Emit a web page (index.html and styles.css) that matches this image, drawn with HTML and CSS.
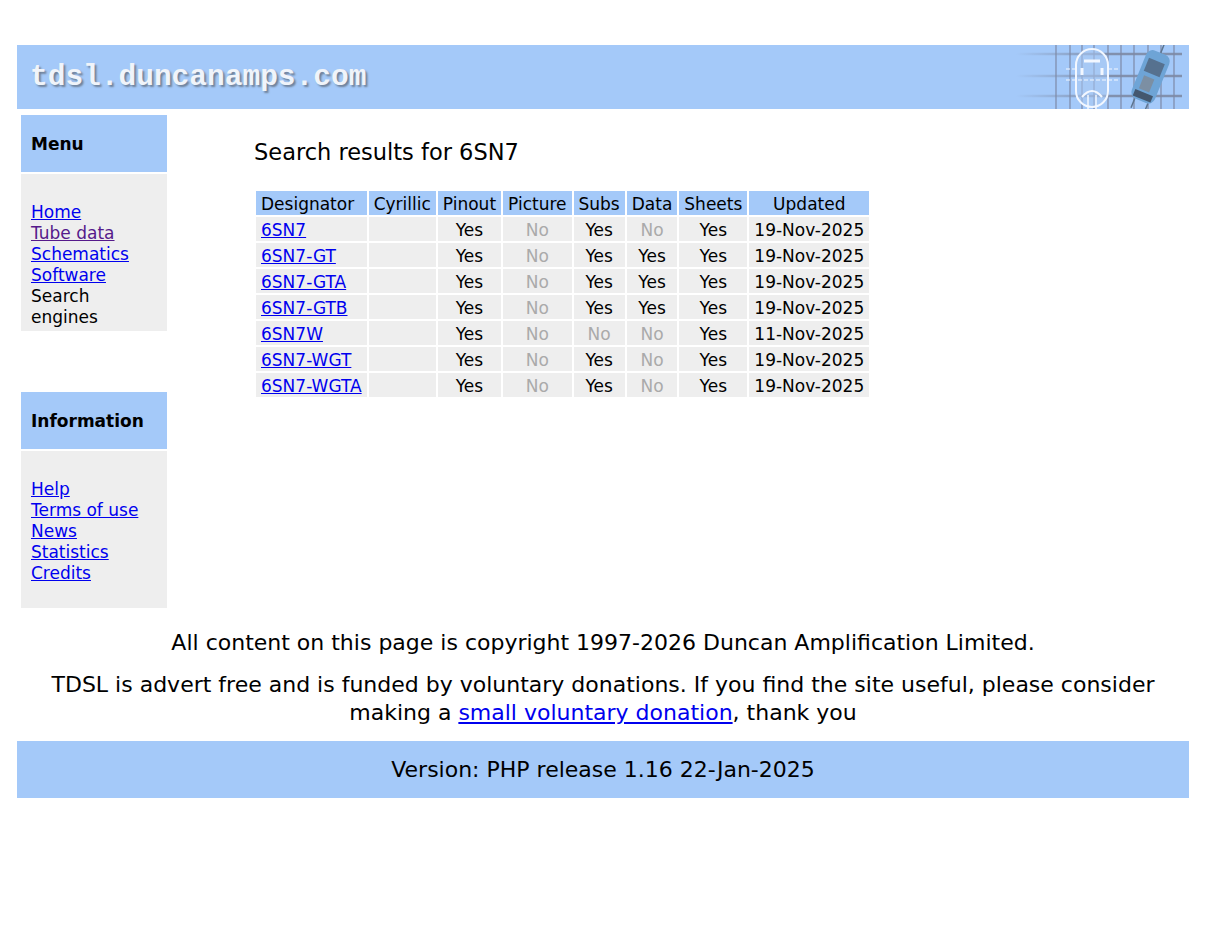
FILE: index.html
```html
<!DOCTYPE html>
<html lang="en">
<head>
    <meta charset="UTF-8">
    <title>TDSL - Search results</title>
    <link rel="stylesheet" href="styles.css">
</head>
<body>
    <div class="banner">
        <div class="logo">tdsl.duncanamps.com</div>
        <svg class="banner-art" width="170" height="64" viewBox="0 0 170 64">
            <defs>
                <linearGradient id="fade" x1="0" x2="1" y1="0" y2="0">
                    <stop offset="0" stop-color="#7d8aa5" stop-opacity="0"/>
                    <stop offset="0.55" stop-color="#7d8aa5" stop-opacity="0.9"/>
                </linearGradient>
            </defs>
            <!-- graph paper -->
            <g stroke="url(#fade)" stroke-width="2" fill="none">
                <path d="M0 9H166M0 31H166M0 51H166" stroke-width="2.4"/>
            </g>
            <g stroke="#7d8aa5" stroke-width="1.6" fill="none">
                <path d="M40 0V64M54 0V64M66 0V64M78 0V64M92 0V64M105 0V64M118 0V64M132 0V64M145 0V64M158 0V64" opacity="0.75"/>
            </g>
            <!-- valve symbol -->
            <g stroke="#f2f7ff" fill="none" stroke-width="2">
                <rect x="60" y="4" width="32" height="58" rx="16" fill="#a9c9f2" fill-opacity="0.55"/>
                <path d="M68 16H84" stroke-width="3"/>
                <path d="M66 23V30M86 23V30" stroke-width="3"/>
                <path d="M50 24H60M92 24H104M50 35H104" stroke-width="1" stroke-dasharray="4 2"/>
                <path d="M66 52Q76 40 86 52" stroke-width="2"/>
                <path d="M72 50V64M80 50V64" stroke-width="1.5"/>
            </g>
            <!-- valve photo -->
            <g transform="rotate(22 135 32)">
                <rect x="122" y="6" width="25" height="52" rx="7" fill="#6ea4d6"/>
                <rect x="126" y="15" width="17" height="14" fill="#56718f"/>
                <rect x="128" y="33" width="11" height="14" fill="#7c8fa3"/>
                <rect x="125" y="49" width="19" height="7" fill="#44576e"/>
                <path d="M135 6V-6M128 58V68M142 58V68" stroke="#5c7590" stroke-width="1.5"/>
            </g>
        </svg>
    </div>

    <div class="layout">
        <div class="sidebar">
            <div class="panel">
                <div class="panel-title">Menu</div>
                <div class="panel-body">
                    <a href="#">Home</a>
                    <a href="#" class="visited">Tube data</a>
                    <a href="#">Schematics</a>
                    <a href="#">Software</a>
                    <span>Search engines</span>
                </div>
            </div>
            <div class="panel">
                <div class="panel-title">Information</div>
                <div class="panel-body">
                    <a href="#">Help</a>
                    <a href="#">Terms of use</a>
                    <a href="#">News</a>
                    <a href="#">Statistics</a>
                    <a href="#">Credits</a>
                </div>
            </div>
        </div>

        <div class="content">
            <h2 class="results-title">Search results for 6SN7</h2>
            <table class="results">
                <thead>
                    <tr>
                        <th class="left">Designator</th>
                        <th>Cyrillic</th>
                        <th>Pinout</th>
                        <th>Picture</th>
                        <th>Subs</th>
                        <th>Data</th>
                        <th>Sheets</th>
                        <th class="updated">Updated</th>
                    </tr>
                </thead>
                <tbody>
                    <tr><td class="left"><a href="#">6SN7</a></td><td></td><td>Yes</td><td class="no">No</td><td>Yes</td><td class="no">No</td><td>Yes</td><td>19-Nov-2025</td></tr>
                    <tr><td class="left"><a href="#">6SN7-GT</a></td><td></td><td>Yes</td><td class="no">No</td><td>Yes</td><td>Yes</td><td>Yes</td><td>19-Nov-2025</td></tr>
                    <tr><td class="left"><a href="#">6SN7-GTA</a></td><td></td><td>Yes</td><td class="no">No</td><td>Yes</td><td>Yes</td><td>Yes</td><td>19-Nov-2025</td></tr>
                    <tr><td class="left"><a href="#">6SN7-GTB</a></td><td></td><td>Yes</td><td class="no">No</td><td>Yes</td><td>Yes</td><td>Yes</td><td>19-Nov-2025</td></tr>
                    <tr><td class="left"><a href="#">6SN7W</a></td><td></td><td>Yes</td><td class="no">No</td><td class="no">No</td><td class="no">No</td><td>Yes</td><td>11-Nov-2025</td></tr>
                    <tr><td class="left"><a href="#">6SN7-WGT</a></td><td></td><td>Yes</td><td class="no">No</td><td>Yes</td><td class="no">No</td><td>Yes</td><td>19-Nov-2025</td></tr>
                    <tr><td class="left"><a href="#">6SN7-WGTA</a></td><td></td><td>Yes</td><td class="no">No</td><td>Yes</td><td class="no">No</td><td>Yes</td><td>19-Nov-2025</td></tr>
                </tbody>
            </table>
        </div>
    </div>

    <div class="footer">
        <p>All content on this page is copyright 1997-2026 Duncan Amplification Limited.</p>
        <p>TDSL is advert free and is funded by voluntary donations. If you find the site useful, please consider making a <a href="#">small voluntary donation</a>, thank you</p>
    </div>
    <div class="version">Version: PHP release 1.16 22-Jan-2025</div>
</body>
</html>
```

FILE: styles.css
```css
* {
    box-sizing: border-box;
}

body {
    margin: 0;
    padding: 45px 17px 0;
    background-color: white;
    color: black;
    font-family: "DejaVu Sans", Verdana, sans-serif;
    font-size: 17px;
}

a {
    color: #0000ee;
}

.banner {
    display: flex;
    justify-content: space-between;
    align-items: center;
    height: 64px;
    background-color: #a4c9f9;
}

.logo {
    padding-left: 13px;
    font-family: "Liberation Mono", monospace;
    font-size: 29.5px;
    font-weight: bold;
    color: #f0f4fa;
    text-shadow: 2px 2px 2px #6f8098;
}

.banner-art {
    flex-shrink: 0;
    margin-right: 3px;
}

.layout {
    display: flex;
    padding: 6px 0 0 4px;
}

.sidebar {
    width: 146px;
    flex-shrink: 0;
}

.panel + .panel {
    margin-top: 61px;
}

.panel-title {
    display: flex;
    align-items: center;
    height: 57px;
    padding-left: 10px;
    background-color: #a4c9f9;
    font-weight: bold;
}

.panel-body {
    display: flex;
    flex-direction: column;
    align-items: flex-start;
    height: 157px;
    margin-top: 2px;
    padding: 28px 10px 0;
    background-color: #eeeeee;
    line-height: 21px;
}

.panel-body .visited {
    color: #551a8b;
}

.content {
    padding: 0 0 0 87px;
}

.results-title {
    margin: 23px 0 23px;
    font-size: 22.5px;
    font-weight: normal;
    line-height: 28px;
}

.results {
    border-spacing: 2px;
    margin-left: 0;
    font-size: 17px;
    line-height: 20px;
}

.results th {
    padding: 3px 5px 1px;
    background-color: #a4c9f9;
    font-weight: normal;
}

.results td {
    padding: 3px 5px 1px;
    background-color: #eeeeee;
    text-align: center;
}

.results .left {
    text-align: left;
}

.results .updated {
    text-align: center;
}

.results .no {
    color: #aaaaaa;
}

.footer {
    margin-top: 21px;
    font-size: 22px;
    line-height: 28px;
    text-align: center;
}

.footer p {
    margin: 0 0 14px;
}

.version {
    display: flex;
    justify-content: center;
    align-items: center;
    height: 57px;
    margin-top: 0;
    background-color: #a4c9f9;
    font-size: 22px;
}
```
